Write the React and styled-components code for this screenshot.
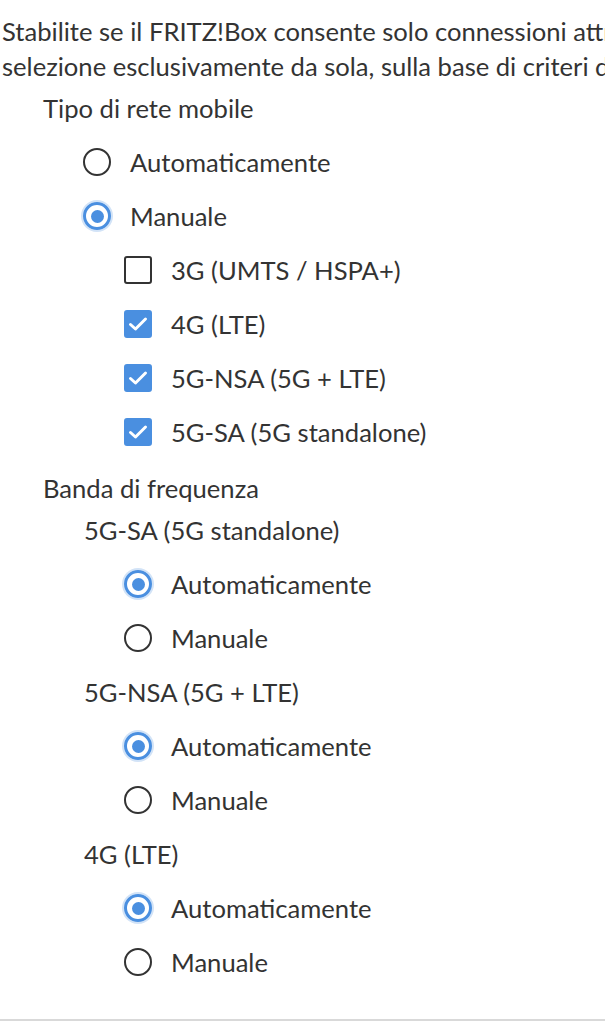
import React from "react";
import styled, { createGlobalStyle } from "styled-components";

const GlobalStyle = createGlobalStyle`
  html, body {
    margin: 0;
    padding: 0;
    background: #fff;
  }
  body {
    font-family: Lato, "Open Sans", "Liberation Sans", sans-serif;
    color: #333;
    overflow: hidden;
  }
`;

const Page = styled.div`
  width: 605px;
  height: 1024px;
  overflow: hidden;
  display: flex;
  flex-direction: column;
`;

const Intro = styled.p`
  margin: 14px 0 0 2px;
  font-size: 25.6px;
  line-height: 35px;
  white-space: nowrap;
`;

const List = styled.div`
  display: flex;
  flex-direction: column;
  margin-top: -3px;
`;

const Title = styled.div`
  height: 54px;
  display: flex;
  align-items: center;
  font-size: 25.6px;
  padding-left: ${(p) => p.$indent}px;
  margin-top: ${(p) => (p.$tight ? 2 : 0)}px;
  margin-bottom: ${(p) => (p.$tight ? -12 : 0)}px;
`;

const Row = styled.label`
  height: 54px;
  display: flex;
  align-items: center;
  gap: 19px;
  padding-left: ${(p) => p.$indent}px;
  font-size: 25.6px;
`;

const Radio = styled.span`
  box-sizing: border-box;
  width: 28px;
  height: 28px;
  border-radius: 50%;
  flex: none;
  border: ${(p) => (p.$on ? "3px solid #4a8fe0" : "2.5px solid #333")};
  display: flex;
  align-items: center;
  justify-content: center;
  box-shadow: ${(p) => (p.$on ? "0 0 0 2px rgba(74,143,224,0.25)" : "none")};

  &::after {
    content: "";
    display: ${(p) => (p.$on ? "block" : "none")};
    width: 13px;
    height: 13px;
    border-radius: 50%;
    background: #4a8fe0;
  }
`;

const Box = styled.span`
  box-sizing: border-box;
  width: 28px;
  height: 28px;
  flex: none;
  border-radius: 3px;
  border: 2.5px solid ${(p) => (p.$on ? "#4a8fe0" : "#333")};
  background: ${(p) => (p.$on ? "#4a8fe0" : "#fff")};
  display: flex;
  align-items: center;
  justify-content: center;
`;

const Divider = styled.div`
  margin-top: 30px;
  height: 2px;
  background: #d9d9d9;
`;

const Check = () => (
  <svg width="20" height="16" viewBox="0 0 20 16">
    <path
      d="M2.5 8.5 L7.5 13 L17.5 3"
      fill="none"
      stroke="#fff"
      strokeWidth="3"
      strokeLinecap="round"
      strokeLinejoin="round"
    />
  </svg>
);

const RadioRow = ({ indent, on, children }) => (
  <Row $indent={indent}>
    <Radio $on={on} />
    {children}
  </Row>
);

const CheckRow = ({ indent, on, children }) => (
  <Row $indent={indent}>
    <Box $on={on}>{on && <Check />}</Box>
    {children}
  </Row>
);

const bands = ["5G-SA (5G standalone)", "5G-NSA (5G + LTE)", "4G (LTE)"];

export default function App() {
  return (
    <Page>
      <GlobalStyle />
      <Intro>
        Stabilite se il FRITZ!Box consente solo connessioni attraverso
        <br />
        selezione esclusivamente da sola, sulla base di criteri di
      </Intro>
      <List>
        <Title $indent={43}>Tipo di rete mobile</Title>
        <RadioRow indent={83}>Automaticamente</RadioRow>
        <RadioRow indent={83} on>
          Manuale
        </RadioRow>
        <CheckRow indent={124}>3G (UMTS / HSPA+)</CheckRow>
        <CheckRow indent={124} on>
          4G (LTE)
        </CheckRow>
        <CheckRow indent={124} on>
          5G-NSA (5G + LTE)
        </CheckRow>
        <CheckRow indent={124} on>
          5G-SA (5G standalone)
        </CheckRow>
        <Title $indent={43} $tight>
          Banda di frequenza
        </Title>
        {bands.map((b) => (
          <React.Fragment key={b}>
            <Title $indent={84}>{b}</Title>
            <RadioRow indent={124} on>
              Automaticamente
            </RadioRow>
            <RadioRow indent={124}>Manuale</RadioRow>
          </React.Fragment>
        ))}
      </List>
      <Divider />
    </Page>
  );
}
